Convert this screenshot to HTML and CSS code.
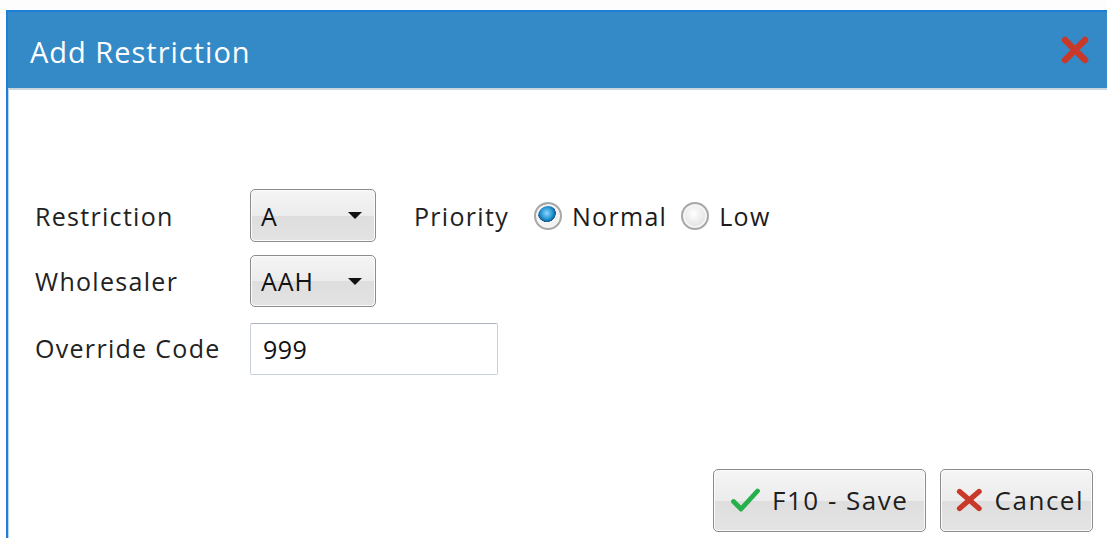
FILE: index.html
```html
<!DOCTYPE html>
<html lang="en">
<head>
<meta charset="utf-8">
<title>Add Restriction</title>
<link rel="stylesheet" href="styles.css">
</head>
<body>
<div class="window">
  <header class="titlebar">
    <h1 class="title">Add Restriction</h1>
    <button class="close" type="button" aria-label="Close">
      <svg width="30" height="30" viewBox="0 0 30 30"><path d="M5 5 L25 25 M25 5 L5 25" stroke="#c9392a" stroke-width="6.5" stroke-linecap="round"/></svg>
    </button>
  </header>
  <main class="content">
    <form class="form">
      <label class="label">Restriction</label>
      <div class="field-line">
        <div class="combo"><span>A</span><i class="caret"></i></div>
        <span class="label priority">Priority</span>
        <label class="radio"><span class="dot on"></span>Normal</label>
        <label class="radio"><span class="dot"></span>Low</label>
      </div>
      <label class="label">Wholesaler</label>
      <div class="field-line">
        <div class="combo combo-b"><span>AAH</span><i class="caret"></i></div>
      </div>
      <label class="label">Override Code</label>
      <div class="field-line">
        <div class="textbox">999</div>
      </div>
    </form>
    <div class="actions">
      <button class="btn save" type="button">
        <svg width="31" height="26" viewBox="0 0 31 26"><path d="M3.5 14.5 L11 22 L27.5 4" fill="none" stroke="#25b04c" stroke-width="4.8" stroke-linecap="round" stroke-linejoin="round"/></svg>
        F10 - Save
      </button>
      <button class="btn cancel" type="button">
        <svg width="30" height="26" viewBox="0 0 30 26"><path d="M4 3.5 L26 22.5 M26 3.5 L4 22.5" stroke="#c9392a" stroke-width="6" stroke-linecap="round"/></svg>
        Cancel
      </button>
    </div>
  </main>
</div>
</body>
</html>
```

FILE: styles.css
```css
html, body {
  margin: 0;
  height: 100%;
  background: #fdfdfd;
  font-family: "Open Sans", "Noto Sans", sans-serif;
  color: #1e1e1e;
}

.window {
  margin: 10px 0 0 6px;
  height: calc(100% - 12px);
  border-left: 2px solid #1e7fd8;
  border-top: 2px solid #1e7fd8;
  box-shadow: inset 1px 0 0 #b9d3ea;
  background: #fff;
  display: flex;
  flex-direction: column;
}

.titlebar {
  height: 76px;
  flex: none;
  background: #348ac7;
  border-bottom: 2px solid #c9d6e0;
  display: flex;
  align-items: center;
  justify-content: space-between;
  padding: 0 17px 0 22px;
}

.title {
  margin: 0 0 -2px;
  font-size: 29px;
  font-weight: 400;
  letter-spacing: 1px;
  color: #fff;
}

.close {
  border: 0;
  background: none;
  padding: 0;
  width: 30px;
  height: 30px;
  display: flex;
}

.content {
  flex: 1;
  display: flex;
  flex-direction: column;
  padding: 99px 14px 6px 27px;
}

.form {
  display: grid;
  grid-template-columns: 215px auto;
  row-gap: 13px;
  align-items: center;
  font-size: 25px;
  letter-spacing: 1.3px;
}

.label {
  color: #222;
}

.field-line {
  display: flex;
  align-items: center;
}

.combo {
  box-sizing: border-box;
  width: 126px;
  height: 53px;
  border: 1px solid #8c8c8c;
  border-radius: 5px;
  background: linear-gradient(#f5f5f5 0%, #ececec 50%, #dedede 51%, #e3e3e3 100%);
  box-shadow: inset 0 0 0 1px #fbfbfb;
  display: flex;
  align-items: center;
  justify-content: space-between;
  padding: 0 13px 0 10px;
  color: #111;
  letter-spacing: 1px;
}

.combo-b { height: 52px; }

.caret {
  width: 0;
  height: 0;
  border-left: 7px solid transparent;
  border-right: 7px solid transparent;
  border-top: 7px solid #111;
}

.priority {
  margin-left: 38px;
  margin-right: 25px;
}

.radio {
  display: flex;
  align-items: center;
  gap: 10px;
  margin-right: 14px;
  color: #1b1b1b;
}

.dot {
  box-sizing: border-box;
  width: 28px;
  height: 28px;
  border-radius: 50%;
  border: 2px solid #a8a8a8;
  background: radial-gradient(circle at 45% 40%, #ffffff 0%, #e8e8e8 55%, #d0d0d0 100%);
  box-shadow: inset 0 0 0 2px #f4f4f4;
}

.dot.on {
  background:
    radial-gradient(circle at 45% 38%, #8fd6ff 0%, #2a9ad8 28%, #0d5e96 44%, transparent 46%),
    radial-gradient(circle, #ffffff 0%, #f0f0f0 60%, #d8d8d8 100%);
}

.textbox {
  box-sizing: border-box;
  width: 248px;
  height: 52px;
  border: 1px solid #c9d0da;
  border-top-color: #aeb4bd;
  border-radius: 2px;
  background: #fff;
  display: flex;
  align-items: center;
  padding-left: 12px;
  color: #111;
  letter-spacing: 0.5px;
  margin-top: 3px;
}

.actions {
  margin-top: auto;
  display: flex;
  justify-content: flex-end;
  gap: 14px;
}

.btn {
  height: 63px;
  box-sizing: border-box;
  border: 1px solid #8c8c8c;
  border-radius: 5px;
  background: linear-gradient(#f5f5f5 0%, #ececec 50%, #dedede 51%, #e4e4e4 100%);
  box-shadow: inset 0 0 0 1px #fbfbfb;
  display: flex;
  align-items: center;
  font-family: "Open Sans", "Noto Sans", sans-serif;
  font-size: 26px;
  letter-spacing: 1.5px;
  color: #1e1e1e;
  padding: 0 8px 2px 16px;
}

.save { width: 213px; gap: 11px; }
.cancel { width: 153px; padding-left: 15px; gap: 12px; }
```
